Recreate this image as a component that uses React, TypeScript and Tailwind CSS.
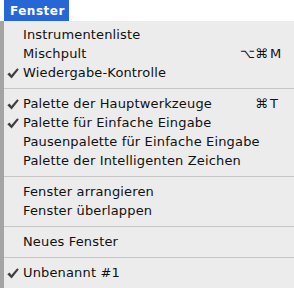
type Item = { label: string; checked?: boolean; mod?: string; key?: string };

const GROUPS: Item[][] = [
  [
    { label: "Instrumentenliste" },
    { label: "Mischpult", mod: "⌥⌘", key: "M" },
    { label: "Wiedergabe-Kontrolle", checked: true },
  ],
  [
    { label: "Palette der Hauptwerkzeuge", checked: true, mod: "⌘", key: "T" },
    { label: "Palette für Einfache Eingabe", checked: true },
    { label: "Pausenpalette für Einfache Eingabe" },
    { label: "Palette der Intelligenten Zeichen" },
  ],
  [{ label: "Fenster arrangieren" }, { label: "Fenster überlappen" }],
  [{ label: "Neues Fenster" }],
  [{ label: "Unbenannt #1", checked: true }],
];

function Check() {
  return (
    <svg width="12" height="11" viewBox="0 0 12 11" className="absolute left-[3px] top-[5px]">
      <path d="M0.3 6.2 L2.6 4.4 L4.4 7.0 L10.2 0.2 L11.8 1.4 L4.6 10.6 Z" fill="#3f3f3f" />
    </svg>
  );
}

function MenuRow({ item }: { item: Item }) {
  return (
    <div className="relative flex h-[19px] items-center pl-[19px] pr-[10px] leading-[19px]">
      {item.checked && <Check />}
      <span className="flex-1 tracking-[0.15px]">{item.label}</span>
      {item.key && (
        <span className="flex">
          <span className="text-right">{item.mod}</span>
          <span className="ml-[2px] w-[14px]">{item.key}</span>
        </span>
      )}
    </div>
  );
}

export default function App() {
  return (
    <div
      className="flex h-[288px] w-[294px] flex-col overflow-hidden bg-white text-[13px] text-[#111]"
      style={{ fontFamily: '"DejaVu Sans", "Noto Sans", sans-serif' }}
    >
      {/* menu bar title */}
      <div className="flex h-[21px] shrink-0">
        <div className="w-[4px]" />
        <div className="flex w-[65px] items-center bg-[#2766d6] pl-[6px] text-[12px] font-bold tracking-[0.5px] text-white">
          Fenster
        </div>
      </div>

      <div className="flex flex-1">
        <div className="w-[4px] bg-[#a4a4a4]" />
        <div className="flex-1 bg-[#ececec] pt-[4px]">
          {GROUPS.map((group, gi) => (
            <div key={gi}>
              {gi > 0 && (
                <div className="flex h-[12px] items-center">
                  <div className="h-px w-full bg-[#c6c6c6]" />
                </div>
              )}
              {group.map((item) => (
                <MenuRow key={item.label} item={item} />
              ))}
            </div>
          ))}
        </div>
      </div>
    </div>
  );
}
